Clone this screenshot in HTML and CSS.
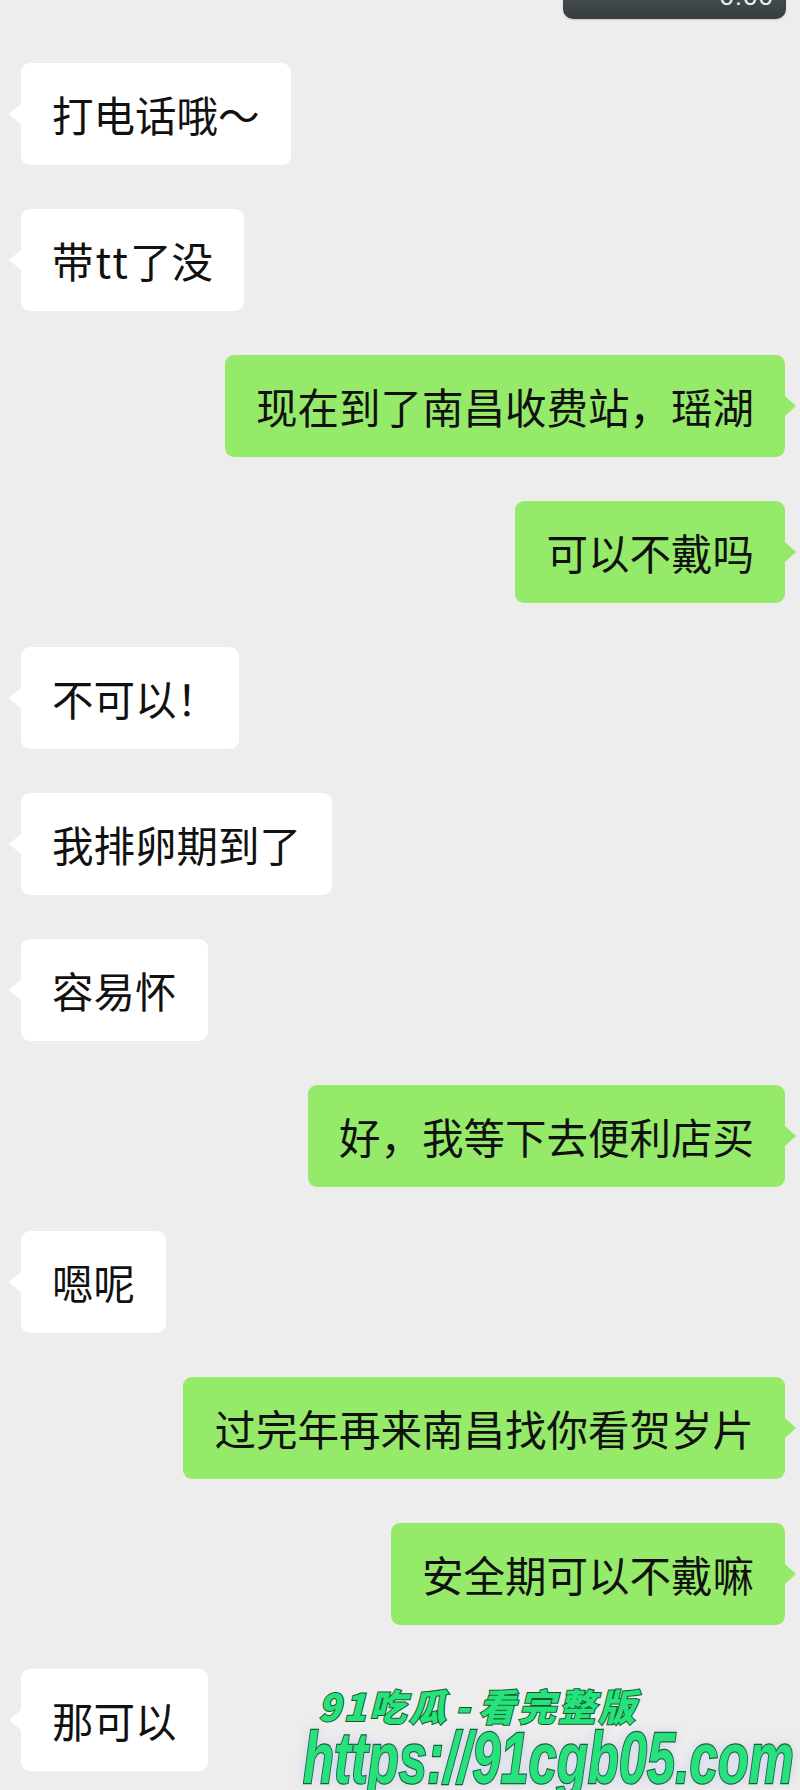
FILE: index.html
```html
<!DOCTYPE html>
<html lang="zh-CN">
<head>
<meta charset="utf-8">
<title>聊天记录</title>
<link rel="stylesheet" href="styles.css">
</head>
<body>
<div class="screen">
  <div class="topbar">
    <div class="toast"><span class="clock">0:00</span></div>
  </div>
  <div class="chat">
    <div class="row in"><div class="bubble">打电话哦～</div></div>
    <div class="row in"><div class="bubble">带<span class="latin">tt</span>了没</div></div>
    <div class="row out"><div class="bubble">现在到了南昌收费站，瑶湖</div></div>
    <div class="row out"><div class="bubble">可以不戴吗</div></div>
    <div class="row in"><div class="bubble">不可以<span class="excl">！</span></div></div>
    <div class="row in"><div class="bubble">我排卵期到了</div></div>
    <div class="row in"><div class="bubble">容易怀</div></div>
    <div class="row out"><div class="bubble">好，我等下去便利店买</div></div>
    <div class="row in"><div class="bubble">嗯呢</div></div>
    <div class="row out"><div class="bubble">过完年再来南昌找你看贺岁片</div></div>
    <div class="row out"><div class="bubble">安全期可以不戴嘛</div></div>
    <div class="row in"><div class="bubble">那可以</div></div>
  </div>
  <div class="watermark">
    <div class="wm-title">91吃瓜<span class="dash">-</span>看完整版</div>
    <div class="wm-url">https://91cgb05.com</div>
  </div>
</div>
</body>
</html>
```

FILE: styles.css
```css
html, body {
  margin: 0;
  padding: 0;
}
body {
  background: #ededed;
  font-family: "Noto Sans CJK SC", "Noto Sans", sans-serif;
  color: #111;
}
.screen {
  position: relative;
  width: 800px;
  height: 1790px;
  overflow: hidden;
}
.topbar {
  display: flex;
  justify-content: flex-end;
  padding-right: 14px;
}
.toast {
  width: 223px;
  height: 19px;
  box-sizing: border-box;
  background: linear-gradient(#414a4b, #363d3e);
  border-radius: 0 0 10px 10px;
  box-shadow: 0 1px 2px rgba(0,0,0,0.15);
  display: flex;
  justify-content: flex-end;
  align-items: flex-start;
  padding-right: 12px;
  overflow: hidden;
}
.clock {
  font-family: "Liberation Sans", Arial, sans-serif;
  font-size: 26px;
  line-height: 26px;
  margin-top: -17px;
  color: #f2f2f2;
  letter-spacing: 1px;
}
.chat {
  display: flex;
  flex-direction: column;
  gap: 44px;
  padding: 44px 15px 0 21px;
}
.row {
  display: flex;
}
.row.in { justify-content: flex-start; }
.row.out { justify-content: flex-end; }
.bubble {
  position: relative;
  font-size: 41.5px;
  line-height: 50px;
  padding: 26px 31px;
  border-radius: 9px;
  white-space: nowrap;
}
.latin {
  letter-spacing: 2px;
  padding-left: 2px;
}
.excl {
  letter-spacing: -10px;
}
.in .bubble { background: #ffffff; }
.out .bubble { background: #95ea69; }
.bubble::before {
  content: "";
  position: absolute;
  top: 50%;
  margin-top: -10px;
  width: 0;
  height: 0;
  border-top: 10px solid transparent;
  border-bottom: 10px solid transparent;
}
.in .bubble::before {
  left: -12px;
  border-right: 12px solid #ffffff;
}
.out .bubble::before {
  right: -11px;
  border-left: 11px solid #95ea69;
}
.watermark {
  position: absolute;
  left: 303px;
  top: 1684px;
  pointer-events: none;
}
.wm-title {
  margin-left: 15px;
  font-family: "Noto Sans CJK SC", sans-serif;
  font-weight: 900;
  font-style: italic;
  font-size: 37px;
  line-height: 42px;
  letter-spacing: 3px;
  color: #27e27c;
  -webkit-text-stroke: 2px #0e5a2c;
  paint-order: stroke fill;
}
.dash {
  display: inline-block;
  padding: 0 6px;
}
.wm-url {
  font-family: "Liberation Sans", Arial, sans-serif;
  font-weight: bold;
  font-style: italic;
  font-size: 72px;
  line-height: 64px;
  color: #27e27c;
  -webkit-text-stroke: 2.5px #0e5a2c;
  paint-order: stroke fill;
  transform: scaleX(0.705);
  transform-origin: left top;
  white-space: nowrap;
  text-shadow: 0 0 14px rgba(130, 150, 230, 0.35);
}
```
